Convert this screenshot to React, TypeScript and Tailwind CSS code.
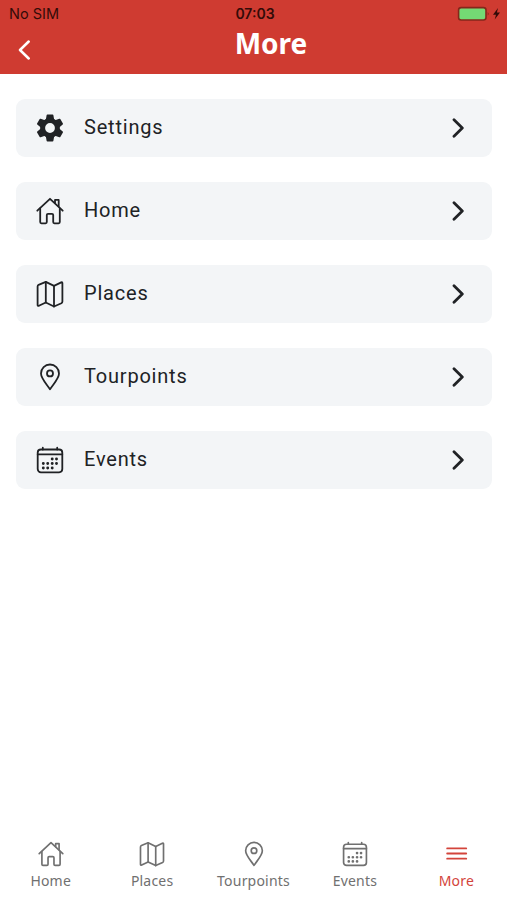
import type { ReactNode } from "react";

interface IconProps {
  className?: string;
}

interface StrokeIconProps extends IconProps {
  children: ReactNode;
}

function StrokeIcon(props: StrokeIconProps) {
  return (
    <svg
      className={props.className}
      viewBox="0 0 28 28"
      fill="none"
      stroke="currentColor"
      strokeWidth={1.8}
      strokeLinecap="round"
      strokeLinejoin="round"
    >
      {props.children}
    </svg>
  );
}

const toothAngles = [0, 60, 120, 180, 240, 300];

function GearIcon({ className }: IconProps) {
  return (
    <svg className={className} viewBox="0 0 28 28" fill="currentColor">
      <circle
        cx="14"
        cy="14"
        r="7.4"
        fill="none"
        stroke="currentColor"
        strokeWidth="5"
      />
      {toothAngles.map((angle) => (
        <path
          key={angle}
          d="M11.4.6h5.2q.7 0 .8.7l.9 5.2H9.7l.9-5.2q.1-.7.8-.7Z"
          transform={`rotate(${angle} 14 14)`}
        />
      ))}
    </svg>
  );
}

function HomeIcon({ className }: IconProps) {
  return (
    <StrokeIcon className={className}>
      <path d="M1.3 13.7 14 1.8l12.7 11.9" />
      <path d="M4.2 11.5v13.6q0 1.2 1.2 1.2h4.2q1.2 0 1.2-1.2v-7q0-1.2 1.2-1.2h4q1.2 0 1.2 1.2v7q0 1.2 1.2 1.2h4.2q1.2 0 1.2-1.2V11.5" />
      <path d="M19 6V2.9h3.7v6.5" />
    </StrokeIcon>
  );
}

function MapIcon({ className }: IconProps) {
  return (
    <StrokeIcon className={className}>
      <path d="M1.6 6.4q0-1.1 1-1.6L9.8 1.9l8.2 4 7.2-3.5q1.2-.5 1.2.8v18.4q0 1.1-1 1.6L18 26.5l-8.2-4-6.9 3.3q-1.3.5-1.3-.8Z" />
      <path d="M9.8 1.9v20.6M18 5.9v20.6" />
    </StrokeIcon>
  );
}

function PinIcon({ className }: IconProps) {
  return (
    <StrokeIcon className={className}>
      <path d="M14 26.3C11 21.5 5 15.6 5 10.5a9 9 0 0 1 18 0C23 15.6 17 21.5 14 26.3Z" />
      <circle cx="14" cy="10.4" r="3" />
    </StrokeIcon>
  );
}

function CalendarIcon({ className }: IconProps) {
  return (
    <StrokeIcon className={className}>
      <rect x="1.7" y="3.5" width="24.6" height="22.8" rx="3.2" />
      <path d="M1.7 8.3h24.6M6.8 1.7v1.8M21.2 1.7v1.8" />
      <path
        d="M16.2 13h.01M20.5 13h.01M7.3 17.5h.01M11.7 17.5h.01M16.2 17.5h.01M20.5 17.5h.01M7.3 22h.01M11.7 22h.01M16.2 22h.01"
        strokeWidth={2.9}
      />
    </StrokeIcon>
  );
}

function MenuIcon({ className }: IconProps) {
  return (
    <StrokeIcon className={className}>
      <path d="M4.5 8h20.500M4.500 13.500h20.500M4.500 19h20.500" strokeWidth={2} />
    </StrokeIcon>
  );
}

function StatusBar() {
  return (
    <div className="grid h-[27px] grid-cols-3 items-center pr-1.5 pl-[9px] font-['Inter',sans-serif] text-[14px] text-[#330b08]">
      <span className="text-[14.5px]">No SIM</span>
      <span className="text-center font-semibold">07:03</span>
      <svg className="h-4 w-[44px] justify-self-end" viewBox="0 0 44 16">
        <rect
          x="1.6"
          y="1.6"
          width="27.4"
          height="12.4"
          rx="2.5"
          fill="#74d974"
          stroke="#84271b"
          strokeWidth="1.6"
        />
        <path d="M30.7 6q2 1.8 0 3.6Z" fill="#84271b" />
        <path d="M41 2 36 8.7h3l-1.3 4.8L43 6.600h-3.100Z" fill="#330b08" />
      </svg>
    </div>
  );
}

function Header() {
  return (
    <header className="h-[74px] bg-[#cf3b31]">
      <StatusBar />
      <div className="grid grid-cols-3 pr-3 pl-4">
        <svg
          className="mt-[13px] h-5 w-4"
          viewBox="0 0 16 20"
          fill="none"
          stroke="white"
          strokeWidth={2.5}
          strokeLinecap="round"
          strokeLinejoin="round"
        >
          <path d="M12.7 1.5 4 10l8.7 8.5" />
        </svg>
        <h1 className="pl-[31px] text-center font-['Noto_Sans',sans-serif] text-[28px] leading-8 font-bold text-white">
          More
        </h1>
      </div>
    </header>
  );
}

interface MenuItemProps {
  label: string;
  icon: ReactNode;
}

function MenuItem(props: MenuItemProps) {
  return (
    <li className="flex h-[58px] items-center rounded-[9px] bg-[#f3f5f7] pr-[26px] pl-5 text-[#202225]">
      {props.icon}
      <span className="mb-0.5 ml-5 flex-1 font-['Roboto',sans-serif] text-[20px] leading-6 tracking-[0.8px]">
        {props.label}
      </span>
      <svg
        className="h-5 w-4"
        viewBox="0 0 16 20"
        fill="none"
        stroke="currentColor"
        strokeWidth={2.8}
        strokeLinecap="round"
        strokeLinejoin="round"
      >
        <path d="m4 1.8 8.3 8.2L4 18.2" />
      </svg>
    </li>
  );
}

interface TabProps {
  label: string;
  icon: ReactNode;
  active?: boolean;
}

function Tab({ label, icon, active }: TabProps) {
  return (
    <a
      className={`flex flex-1 flex-col items-center ${
        active ? "text-[#d3443b]" : "text-[#707070]"
      }`}
    >
      {icon}
      <span className="mt-1 font-['Noto_Sans',sans-serif] text-[14px] leading-5 tracking-[0.2px]">
        {label}
      </span>
    </a>
  );
}

const listIcon = "size-7 shrink-0";
const tabIcon = "size-[26px] shrink-0";

function App() {
  return (
    <div className="flex h-[900px] w-[507px] flex-col bg-white">
      <Header />

      <ul className="mt-[25px] mr-[15px] ml-4 flex flex-1 flex-col gap-[25px]">
        <MenuItem label="Settings" icon={<GearIcon className={listIcon} />} />
        <MenuItem label="Home" icon={<HomeIcon className={listIcon} />} />
        <MenuItem label="Places" icon={<MapIcon className={listIcon} />} />
        <MenuItem label="Tourpoints" icon={<PinIcon className={listIcon} />} />
        <MenuItem label="Events" icon={<CalendarIcon className={listIcon} />} />
      </ul>

      <nav className="flex h-[59px]">
        <Tab label="Home" icon={<HomeIcon className={tabIcon} />} />
        <Tab label="Places" icon={<MapIcon className={tabIcon} />} />
        <Tab label="Tourpoints" icon={<PinIcon className={tabIcon} />} />
        <Tab label="Events" icon={<CalendarIcon className={tabIcon} />} />
        <Tab label="More" icon={<MenuIcon className={tabIcon} />} active />
      </nav>
    </div>
  );
}

export default App;
